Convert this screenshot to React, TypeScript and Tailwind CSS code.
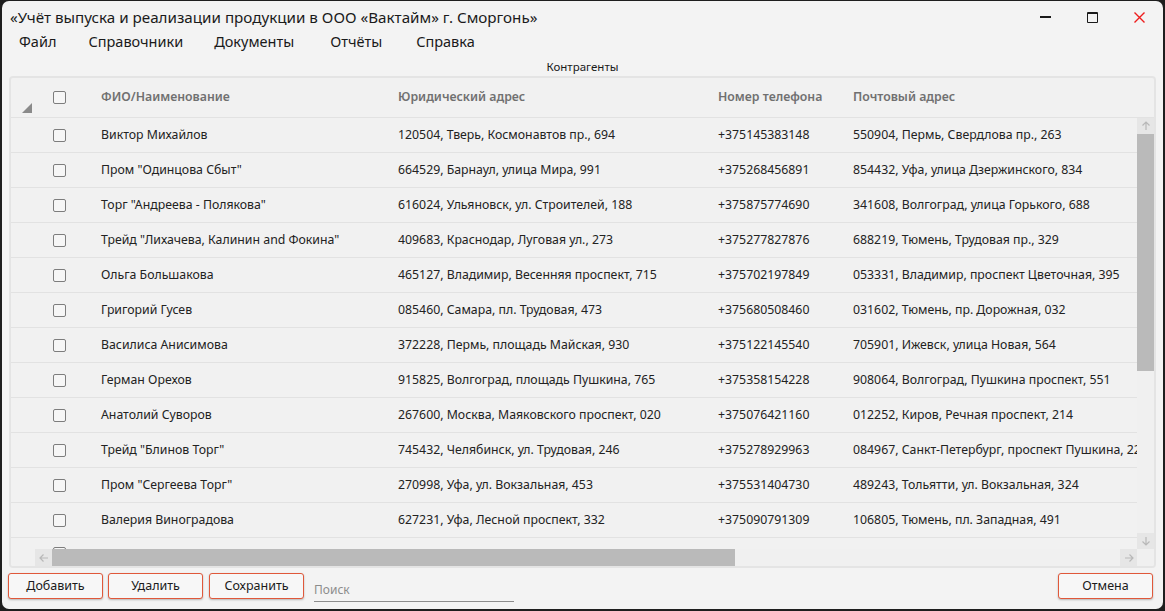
import React from "react";

const rows = [
  ["Виктор Михайлов", "120504, Тверь, Космонавтов пр., 694", "+375145383148", "550904, Пермь, Свердлова пр., 263"],
  ["Пром \"Одинцова Сбыт\"", "664529, Барнаул, улица Мира, 991", "+375268456891", "854432, Уфа, улица Дзержинского, 834"],
  ["Торг \"Андреева - Полякова\"", "616024, Ульяновск, ул. Строителей, 188", "+375875774690", "341608, Волгоград, улица Горького, 688"],
  ["Трейд \"Лихачева, Калинин and Фокина\"", "409683, Краснодар, Луговая ул., 273", "+375277827876", "688219, Тюмень, Трудовая пр., 329"],
  ["Ольга Большакова", "465127, Владимир, Весенняя проспект, 715", "+375702197849", "053331, Владимир, проспект Цветочная, 395"],
  ["Григорий Гусев", "085460, Самара, пл. Трудовая, 473", "+375680508460", "031602, Тюмень, пр. Дорожная, 032"],
  ["Василиса Анисимова", "372228, Пермь, площадь Майская, 930", "+375122145540", "705901, Ижевск, улица Новая, 564"],
  ["Герман Орехов", "915825, Волгоград, площадь Пушкина, 765", "+375358154228", "908064, Волгоград, Пушкина проспект, 551"],
  ["Анатолий Суворов", "267600, Москва, Маяковского проспект, 020", "+375076421160", "012252, Киров, Речная проспект, 214"],
  ["Трейд \"Блинов Торг\"", "745432, Челябинск, ул. Трудовая, 246", "+375278929963", "084967, Санкт-Петербург, проспект Пушкина, 222"],
  ["Пром \"Сергеева Торг\"", "270998, Уфа, ул. Вокзальная, 453", "+375531404730", "489243, Тольятти, ул. Вокзальная, 324"],
  ["Валерия Виноградова", "627231, Уфа, Лесной проспект, 332", "+375090791309", "106805, Тюмень, пл. Западная, 491"],
];

const font = "font-['Segoe_UI','Noto_Sans','Open_Sans',sans-serif]";
const btnCls =
  "h-[26px] w-[95px] shrink-0 rounded-[3px] border border-[#e0583a] bg-[#f7f7f7] text-[12.5px] text-[#1b1b1b] shadow-[0_1px_2px_rgba(0,0,0,0.25)]";

function Checkbox() {
  return <div className="h-[13px] w-[13px] rounded-[2px] border-[1.5px] border-[#7d7d7d] bg-[#f6f6f6]" />;
}

function Arrow({ dir }: { dir: "up" | "down" | "left" | "right" }) {
  const rot = { up: "rotate-0", down: "rotate-180", left: "-rotate-90", right: "rotate-90" }[dir];
  return (
    <svg width="10" height="10" viewBox="0 0 10 10" className={rot}>
      <path d="M5 9V1M1.5 4.5L5 1l3.5 3.5" stroke="#b8b8b8" strokeWidth="1.2" fill="none" />
    </svg>
  );
}

function Cells({ r }: { r: string[] }) {
  return (
    <>
      <div className="w-[31px] shrink-0" />
      <div className="w-[59px] shrink-0 pl-[11px]">
        <Checkbox />
      </div>
      <div className="w-[297px] shrink-0">{r[0]}</div>
      <div className="w-[320px] shrink-0">{r[1]}</div>
      <div className="w-[135px] shrink-0">{r[2]}</div>
      <div className="shrink-0">{r[3]}</div>
    </>
  );
}

export default function App() {
  return (
    <div className={`h-[611px] w-[1165px] bg-[#1e1e1e] pb-[2px] pl-[2px] pr-[2px] pt-[1px] ${font}`}>
      <div className="flex h-full flex-col rounded-[7px] bg-[#f3f3f3]">
        {/* title bar */}
        <div className="flex h-[32px] items-center pl-[8px] text-[15.2px] text-[#1a1a1a]">
          <span className="flex-1 pt-[1px]">«Учёт выпуска и реализации продукции в ООО «Вактайм» г. Сморгонь»</span>
          <div className="flex items-center">
            <div className="flex w-[47px] justify-center">
              <div className="h-[2px] w-[11px] bg-[#1a1a1a]" />
            </div>
            <div className="flex w-[47px] justify-center">
              <div className="h-[11px] w-[11px] rounded-[1px] border border-t-2 border-[#1a1a1a]" />
            </div>
            <div className="flex w-[47px] justify-center pr-[1px]">
              <svg width="11" height="11" viewBox="0 0 11 11">
                <path d="M0.5 0.5l10 10M10.5 0.5l-10 10" stroke="#ee1c1c" strokeWidth="1.4" />
              </svg>
            </div>
          </div>
        </div>
        {/* menu */}
        <div className="flex h-[18px] items-center text-[14.5px] text-[#1a1a1a]">
          <span className="ml-[17px]">Файл</span>
          <span className="ml-[32px]">Справочники</span>
          <span className="ml-[31px]">Документы</span>
          <span className="ml-[36px]">Отчёты</span>
          <span className="ml-[34px]">Справка</span>
        </div>
        <div className="flex h-[25px] items-end justify-center pb-[1px] text-[11.5px] text-[#1a1a1a]">Контрагенты</div>

        {/* grid panel */}
        <div className="mx-[7px] flex h-[492px] flex-col overflow-hidden rounded-[4px] border-2 border-[#e4e4e4] bg-[#f1f1f1]">
          <div className="flex h-[40px] shrink-0 items-center whitespace-nowrap border-b border-[#e2e2e2] text-[12.3px] font-semibold text-[#707070]">
            <div className="flex h-full w-[31px] shrink-0 items-end pb-[4px] pl-[11px]">
              <svg width="10" height="10" viewBox="0 0 10 10">
                <polygon points="10,0 10,10 0,10" fill="#8a8a8a" />
              </svg>
            </div>
            <div className="w-[59px] shrink-0 pl-[11px]">
              <Checkbox />
            </div>
            <div className="w-[297px] shrink-0">ФИО/Наименование</div>
            <div className="w-[320px] shrink-0">Юридический адрес</div>
            <div className="w-[135px] shrink-0">Номер телефона</div>
            <div className="shrink-0">Почтовый адрес</div>
          </div>
          <div className="grid min-h-0 flex-1 grid-cols-[minmax(0,1fr)_17px] grid-rows-[minmax(0,1fr)_17px]">
            <div className="min-w-0 overflow-hidden text-[12.3px] text-[#222]">
              {rows.map((r, i) => (
                <div key={i} className="flex h-[35px] items-center whitespace-nowrap border-b border-[#e2e2e2]">
                  <Cells r={r} />
                </div>
              ))}
              <div className="flex h-[35px] items-start pt-[9px]">
                <div className="w-[31px] shrink-0" />
                <div className="w-[59px] shrink-0 pl-[11px]">
                  <Checkbox />
                </div>
              </div>
            </div>
            <div className="flex flex-col bg-[#f0f0f0]">
              <div className="flex h-[16px] shrink-0 items-center justify-center bg-[#e6e6e6]">
                <Arrow dir="up" />
              </div>
              <div className="h-[237px] shrink-0 bg-[#bababa]" />
              <div className="flex-1" />
              <div className="flex h-[16px] shrink-0 items-center justify-center bg-[#e6e6e6]">
                <Arrow dir="down" />
              </div>
            </div>
            <div className="flex min-w-0">
              <div className="w-[24px] shrink-0 bg-[#f1f1f1]" />
              <div className="flex w-[17px] shrink-0 items-center justify-center bg-[#e6e6e6]">
                <Arrow dir="left" />
              </div>
              <div className="w-[683px] shrink-0 bg-[#bababa]" />
              <div className="flex-1 bg-[#f0f0f0]" />
              <div className="flex w-[17px] shrink-0 items-center justify-center bg-[#e6e6e6]">
                <Arrow dir="right" />
              </div>
            </div>
            <div className="bg-[#f0f0f0]" />
          </div>
        </div>

        {/* bottom bar */}
        <div className="mt-[5px] flex items-start pl-[6px] pr-[10px]">
          <button className={btnCls}>Добавить</button>
          <button className={`${btnCls} ml-[5px]`}>Удалить</button>
          <button className={`${btnCls} ml-[6px]`}>Сохранить</button>
          <div className="ml-[10px] mt-[9px] w-[200px] border-b border-[#8c8c8c] pb-[3px] text-[12px] leading-[16px] text-[#8c8c8c]">
            Поиск
          </div>
          <div className="flex-1" />
          <button className={btnCls}>Отмена</button>
        </div>
      </div>
    </div>
  );
}
